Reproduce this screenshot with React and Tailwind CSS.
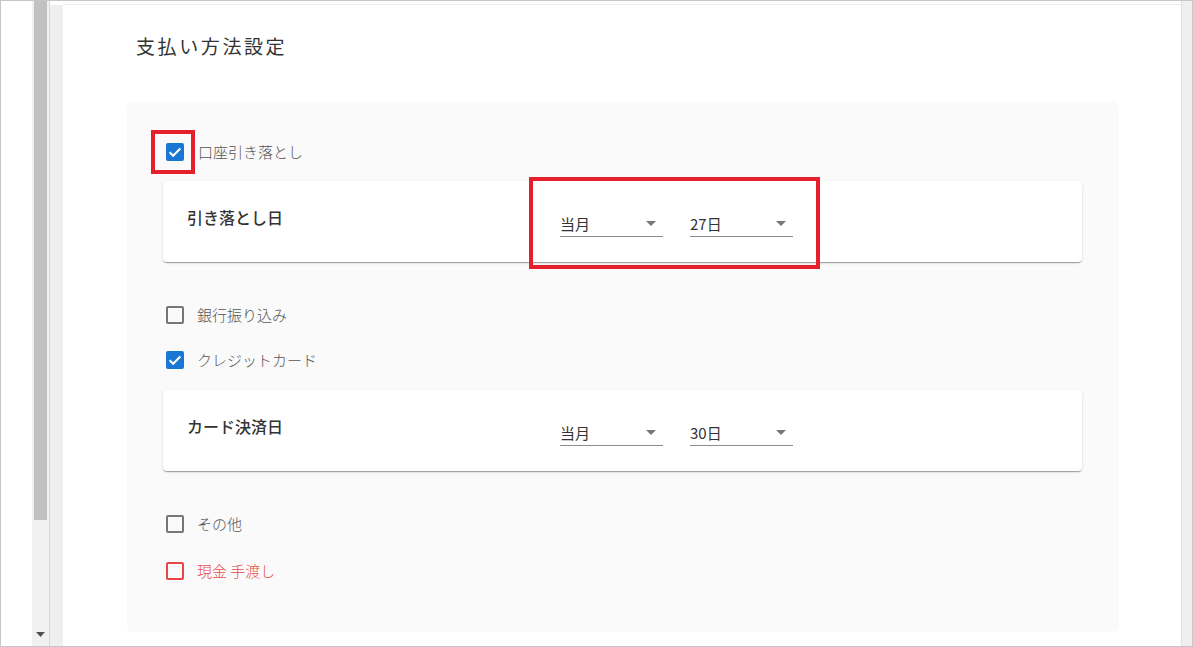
import React from "react";

const font = { fontFamily: '"Noto Sans CJK JP", "Noto Sans", sans-serif' };

function Check({ state }) {
  if (state === "checked") {
    return (
      <div className="w-[18px] h-[18px] rounded-[2px] bg-[#1976d2] flex items-center justify-center">
        <svg width="16" height="16" viewBox="0 0 24 24">
          <path d="M4 12.5l5.2 5L20 6.8" fill="none" stroke="#fff" strokeWidth="3.2" />
        </svg>
      </div>
    );
  }
  if (state === "red") {
    return <div className="w-[18px] h-[18px] rounded-[2px] border-2 border-[#e8474a]" />;
  }
  return <div className="w-[18px] h-[18px] rounded-[2px] border-2 border-[#767676]" />;
}

function Row({ state, label, red, mt, gap = "ml-[13px]" }) {
  return (
    <div className={`h-[42px] flex items-center pl-[39px] ${mt}`}>
      <Check state={state} />
      <span className={`${gap} text-[15px] leading-[24px] font-light ${red ? "text-[#e54b4b]" : "text-[#555]"}`}>{label}</span>
    </div>
  );
}

function Select({ value, ml }) {
  return (
    <div className={`w-[103px] h-[26px] border-b border-[#8c8c8c] flex items-center justify-between ${ml}`}>
      <span className="text-[15px] text-[#333] leading-[24px]">{value}</span>
      <svg width="10" height="5" viewBox="0 0 10 5" className="mr-[7px]">
        <path d="M0 0h10L5 5z" fill="#777" />
      </svg>
    </div>
  );
}

function Card({ title, a, b, mt }) {
  return (
    <div className={`ml-[36px] w-[919px] h-[81px] bg-white rounded-[4px] shadow-[0_2px_1px_-1px_rgba(0,0,0,0.2),0_1px_1px_0_rgba(0,0,0,0.14),0_1px_3px_0_rgba(0,0,0,0.12)] flex ${mt}`}>
      <div className="w-[397px] pl-[24px] pt-[24px]">
        <span className="text-[16px] leading-[24px] font-medium text-[#333]">{title}</span>
      </div>
      <div className="pt-[30px] flex">
        <Select value={a} ml="" />
        <Select value={b} ml="ml-[27px]" />
      </div>
    </div>
  );
}

export default function App() {
  return (
    <div className="relative w-[1193px] h-[647px] border border-[#c6c6c6] bg-white flex overflow-hidden" style={font}>
      <div className="w-[31px] shrink-0 bg-white" />
      <div className="w-[17px] shrink-0 bg-[#f1f1f1] flex flex-col">
        <div className="h-[519px] mx-[2px] bg-[#c1c1c1]" />
        <div className="flex-1" />
        <div className="h-[14px] flex items-start justify-center">
          <svg width="9" height="5" viewBox="0 0 9 5"><path d="M0 0h9L4.5 5z" fill="#505050" /></svg>
        </div>
      </div>
      <div className="w-px shrink-0 bg-[#d6d6d6]" />
      <div className="w-[13px] shrink-0 flex flex-col">
        <div className="h-[4px] bg-white" />
        <div className="flex-1 bg-[#efefef]" />
      </div>
      <div className="w-[1118px] shrink-0 flex flex-col">
        <div className="h-[4px] bg-white border-b border-[#ececec]" />
        <div className="flex-1 bg-white flex flex-col">
          <div className="pl-[73px] pt-[29px] h-[24px] box-content">
            <span className="text-[19px] leading-[24px] tracking-[2.6px] text-[#333]">支払い方法設定</span>
          </div>
          <div className="ml-[64px] mt-[44px] w-[992px] h-[530px] bg-[#fafafa] rounded-[6px] pt-[29px]">
            <Row state="checked" label="口座引き落とし" gap="ml-[14px]" mt="" />
            <Card title="引き落とし日" a="当月" b="27日" mt="mt-[8px]" />
            <Row state="empty" label="銀行振り込み" mt="mt-[32px]" />
            <Row state="checked" label="クレジットカード" mt="mt-[3px]" />
            <Card title="カード決済日" a="当月" b="30日" mt="mt-[9px]" />
            <Row state="empty" label="その他" mt="mt-[32px]" />
            <Row state="red" label="現金 手渡し" red mt="mt-[5px]" />
          </div>
        </div>
      </div>
      <div className="w-px shrink-0 bg-[#e2e2e2]" />
      <div className="w-[10px] shrink-0 bg-[#efefef]" />

      <div className="absolute left-[150px] top-[129px] w-[44px] h-[44px] border-4 border-[#e3202b]" />
      <div className="absolute left-[528px] top-[176px] w-[291px] h-[92px] border-4 border-[#e3202b]" />
    </div>
  );
}
